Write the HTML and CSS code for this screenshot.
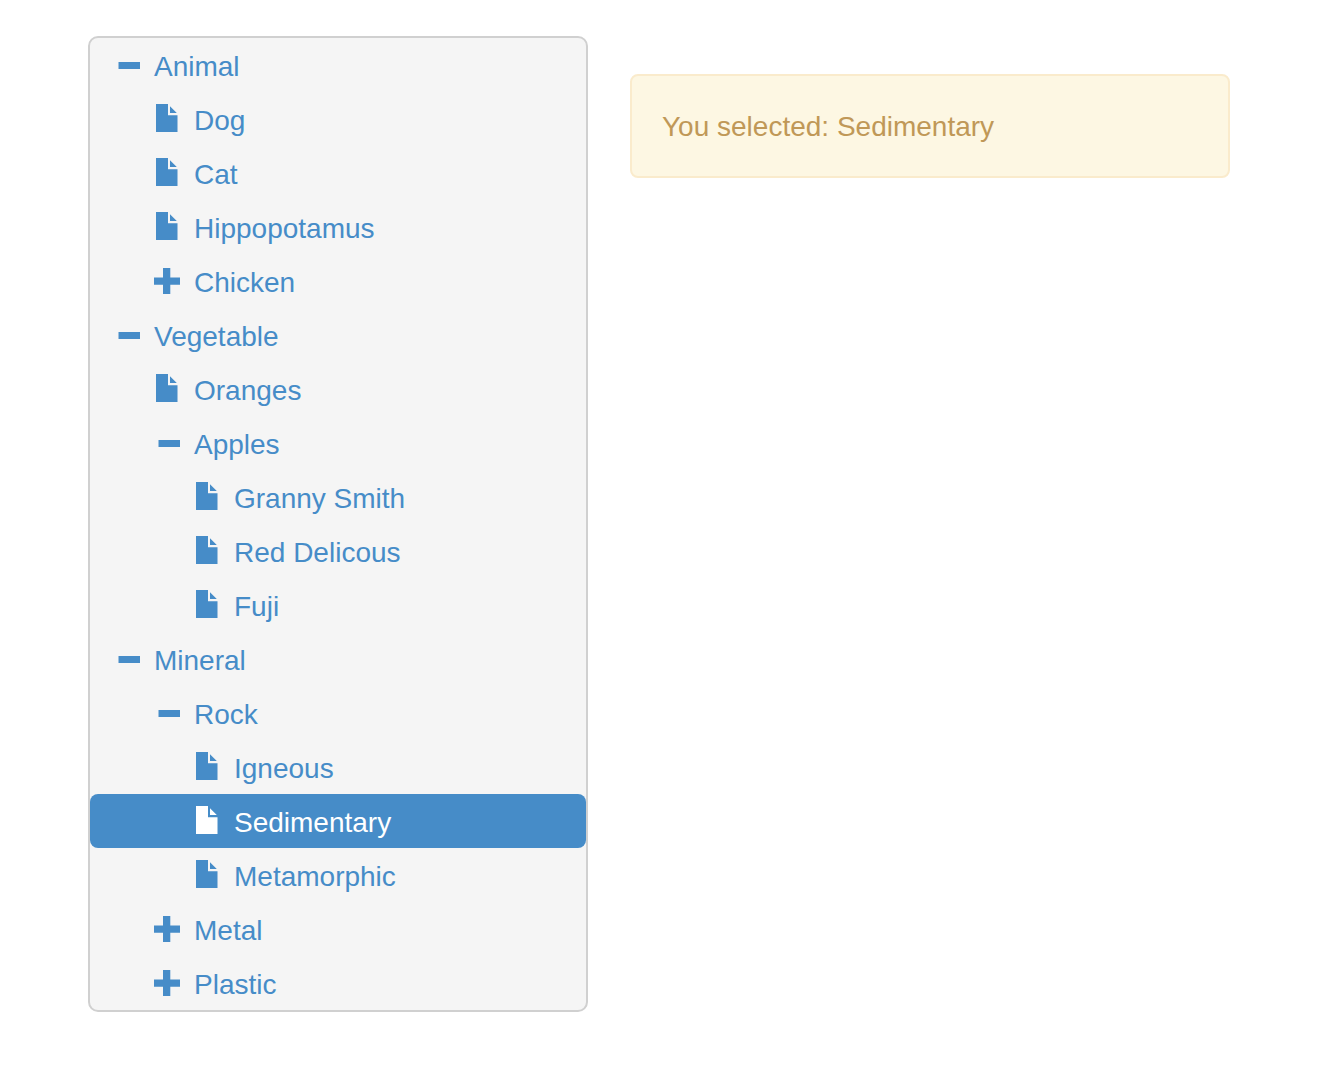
FILE: index.html
```html
<!DOCTYPE html>
<html lang="en">
<head>
<meta charset="utf-8">
<meta name="viewport" content="width=device-width, initial-scale=1">
<title>Tree navigation</title>
<link rel="stylesheet" href="styles.css">
</head>
<body>
<svg class="sprite" aria-hidden="true">
  <symbol id="minus" viewBox="0 0 28 28"><path d="M4.500 12H26v7H4.500z"/></symbol>
  <symbol id="plus" viewBox="0 0 28 28"><path d="M9 2h7.300v9.500H26v7.300h-9.700V28H9v-9.200H0v-7.300h9z"/></symbol>
  <symbol id="file" viewBox="0 0 28 28"><path d="M2 0h12v11.200h9.500V28H2zM16 2.200L22.800 9H16z"/></symbol>
</svg>
<main class="page">
  <nav class="tree" aria-label="Categories">
    <ul class="level-1">
      <li><a class="row" href="#animal"><svg class="icon"><use href="#minus"/></svg>Animal</a>
        <ul class="level-2">
          <li><a class="row" href="#dog"><svg class="icon"><use href="#file"/></svg>Dog</a></li>
          <li><a class="row" href="#cat"><svg class="icon"><use href="#file"/></svg>Cat</a></li>
          <li><a class="row" href="#hippopotamus"><svg class="icon"><use href="#file"/></svg>Hippopotamus</a></li>
          <li><a class="row" href="#chicken"><svg class="icon"><use href="#plus"/></svg>Chicken</a></li>
        </ul>
      </li>
      <li><a class="row" href="#vegetable"><svg class="icon"><use href="#minus"/></svg>Vegetable</a>
        <ul class="level-2">
          <li><a class="row" href="#oranges"><svg class="icon"><use href="#file"/></svg>Oranges</a></li>
          <li><a class="row" href="#apples"><svg class="icon"><use href="#minus"/></svg>Apples</a>
            <ul class="level-3">
              <li><a class="row" href="#granny-smith"><svg class="icon"><use href="#file"/></svg>Granny Smith</a></li>
              <li><a class="row" href="#red-delicous"><svg class="icon"><use href="#file"/></svg>Red Delicous</a></li>
              <li><a class="row" href="#fuji"><svg class="icon"><use href="#file"/></svg>Fuji</a></li>
            </ul>
          </li>
        </ul>
      </li>
      <li><a class="row" href="#mineral"><svg class="icon"><use href="#minus"/></svg>Mineral</a>
        <ul class="level-2">
          <li><a class="row" href="#rock"><svg class="icon"><use href="#minus"/></svg>Rock</a>
            <ul class="level-3">
              <li><a class="row" href="#igneous"><svg class="icon"><use href="#file"/></svg>Igneous</a></li>
              <li><a class="row selected" href="#sedimentary" aria-current="true"><svg class="icon"><use href="#file"/></svg>Sedimentary</a></li>
              <li><a class="row" href="#metamorphic"><svg class="icon"><use href="#file"/></svg>Metamorphic</a></li>
            </ul>
          </li>
          <li><a class="row" href="#metal"><svg class="icon"><use href="#plus"/></svg>Metal</a></li>
          <li><a class="row" href="#plastic"><svg class="icon"><use href="#plus"/></svg>Plastic</a></li>
        </ul>
      </li>
    </ul>
  </nav>
  <p class="alert" role="status">You selected: Sedimentary</p>
</main>
</body>
</html>
```
FILE: styles.css
```css
* {
  box-sizing: border-box;
}

body {
  margin: 0;
  background: #fff;
  color: #333;
  font-family: "Liberation Sans", Arial, sans-serif;
  font-size: 28px;
  line-height: 40px;
}

.sprite {
  display: none;
}

.page {
  display: grid;
  grid-template-columns: 5fr 6fr;
  align-items: start;
  gap: 42px;
  padding: 36px 98px 70px 88px;
}

.tree {
  border: 2px solid #d0d0d0;
  border-radius: 10px;
  background: #f5f5f5;
}

.tree ul {
  margin: 0;
  padding: 0;
  list-style: none;
}

.row {
  display: flex;
  align-items: center;
  gap: 12px;
  padding: 9px 24px 5px;
  border-radius: 8px;
  color: #468cc8;
  text-decoration: none;
}

.level-2 .row {
  padding-left: 64px;
}

.level-3 .row {
  padding-left: 104px;
}

.row.selected {
  background: #468cc8;
  color: #fff;
}

.icon {
  flex: none;
  width: 28px;
  height: 28px;
  margin-bottom: 6px;
  fill: currentColor;
}

.alert {
  margin: 38px 0 0;
  padding: 31px 30px 29px;
  border: 2px solid #faebcc;
  border-radius: 8px;
  background: #fdf7e3;
  color: #c09857;
}
```
